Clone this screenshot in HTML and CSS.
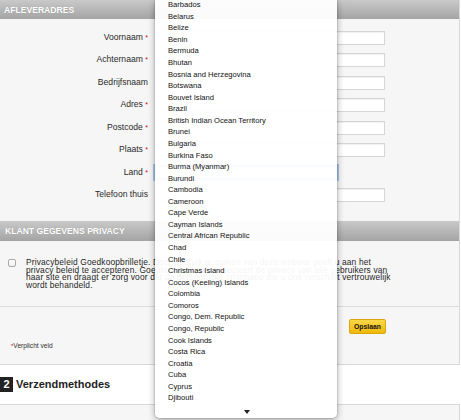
FILE: index.html
```html
<!DOCTYPE html>
<html lang="nl">
<head>
<meta charset="utf-8">
<title>Afleveradres</title>
<link rel="stylesheet" href="styles.css">
</head>
<body>
<div class="page">
  <section class="panel">
    <div class="bar">AFLEVERADRES</div>
    <div class="form">
      <label class="lbl">Voornaam <span class="req">*</span></label><div class="input"></div>
      <label class="lbl">Achternaam <span class="req">*</span></label><div class="input"></div>
      <label class="lbl">Bedrijfsnaam</label><div class="input"></div>
      <label class="lbl">Adres <span class="req">*</span></label><div class="input"></div>
      <label class="lbl">Postcode <span class="req">*</span></label><div class="input"></div>
      <label class="lbl">Plaats <span class="req">*</span></label><div class="input"></div>
      <label class="lbl">Land <span class="req">*</span></label><div class="select"></div>
      <label class="lbl">Telefoon thuis</label><div class="input"></div>
    </div>
    <div class="bar bar2">KLANT GEGEVENS PRIVACY</div>
    <div class="privacy">
      <span class="check"></span>
      <p class="ptext">Privacybeleid Goedkoopbrilletje. Door gebruik te maken van deze website geeft u aan het privacy beleid te accepteren. Goedkoopbrilletje respecteert de privacy van alle gebruikers van haar site en draagt er zorg voor dat de persoonlijke informatie die u ons verschaft vertrouwelijk wordt behandeld.</p>
    </div>
    <div class="footer">
      <div class="actions"><button class="btn">Opslaan</button></div>
      <div class="note"><span class="req">*</span>Verplicht veld</div>
    </div>
  </section>
  <h2 class="step"><span class="num">2</span>Verzendmethodes</h2>
  <section class="panel next"></section>

  <div class="menu">
    <ul class="list">
      <li>Barbados</li>
      <li>Belarus</li>
      <li>Belize</li>
      <li>Benin</li>
      <li>Bermuda</li>
      <li>Bhutan</li>
      <li>Bosnia and Herzegovina</li>
      <li>Botswana</li>
      <li>Bouvet Island</li>
      <li>Brazil</li>
      <li>British Indian Ocean Territory</li>
      <li>Brunei</li>
      <li>Bulgaria</li>
      <li>Burkina Faso</li>
      <li>Burma (Myanmar)</li>
      <li>Burundi</li>
      <li>Cambodia</li>
      <li>Cameroon</li>
      <li>Cape Verde</li>
      <li>Cayman Islands</li>
      <li>Central African Republic</li>
      <li>Chad</li>
      <li>Chile</li>
      <li>Christmas Island</li>
      <li>Cocos (Keeling) Islands</li>
      <li>Colombia</li>
      <li>Comoros</li>
      <li>Congo, Dem. Republic</li>
      <li>Congo, Republic</li>
      <li>Cook Islands</li>
      <li>Costa Rica</li>
      <li>Croatia</li>
      <li>Cuba</li>
      <li>Cyprus</li>
      <li>Djibouti</li>
    </ul>
    <div class="more"><span class="arrow"></span></div>
  </div>
</div>
</body>
</html>
```
FILE: styles.css
```css
html, body {
  margin: 0;
  padding: 0;
  background: #fff;
}
body {
  font-family: "Liberation Sans", Arial, Helvetica, sans-serif;
  color: #333;
  overflow: hidden;
}
.page {
  position: relative;
  width: 461px;
  height: 420px;
  overflow: hidden;
}
.panel {
  background: #f6f6f6;
  border-right: 1px solid #d9d9d9;
  border-bottom: 1px solid #d9d9d9;
  box-sizing: border-box;
  width: 460px;
}
.bar {
  height: 19px;
  line-height: 20px;
  padding-left: 4px;
  background: linear-gradient(#c9c9c9, #a4a4a4);
  color: #fff;
  font-weight: bold;
  font-size: 8.6px;
  text-shadow: 0 0 1px rgba(0,0,0,0.2);
}
.bar2 {
  height: 20px;
  line-height: 20px;
  padding-left: 5px;
}
.form {
  display: grid;
  grid-template-columns: 148px 230px;
  column-gap: 7px;
  grid-auto-rows: 22.45px;
  align-items: center;
  padding: 7.8px 0 14.6px;
}
.lbl {
  text-align: right;
  font-size: 8.6px;
  color: #2a2a2a;
  margin-top: -2px;
}
.req {
  color: #d0021b;
  font-size: 7px;
}
.input {
  height: 14px;
  box-sizing: border-box;
  background: #fff;
  border: 1px solid #d6d6d6;
  box-shadow: inset 0 1px 1px rgba(0,0,0,0.06);
}
.select {
  width: 182px;
  height: 13px;
  box-sizing: border-box;
  background: #fff;
  border: 1px solid #7aa7dc;
  box-shadow: 0 0 0 2px rgba(110,160,225,0.55);
}
.privacy {
  display: flex;
  align-items: flex-start;
  height: 66px;
  box-sizing: border-box;
  padding: 18.5px 0 0 8px;
  border-bottom: 1px solid #dcdcdc;
}
.check {
  width: 8px;
  height: 8px;
  box-sizing: border-box;
  margin-top: 0;
  border: 1px solid #a9a9a9;
  border-radius: 2px;
  background: linear-gradient(#fff, #eee);
  flex: none;
}
.ptext {
  margin: 0 0 0 10px;
  width: 370px;
  font-size: 8.4px;
  letter-spacing: 0.15px;
  line-height: 7.4px;
  color: #1e1e1e;
}
.footer {
  height: 57px;
  padding-top: 12px;
  box-sizing: border-box;
}
.actions {
  width: 386px;
  display: flex;
  justify-content: flex-end;
}
.btn {
  width: 37px;
  height: 15px;
  padding: 0;
  border: 1px solid #d9a70c;
  border-radius: 2px;
  background: linear-gradient(#fbd84a, #f0b90b);
  font-family: "Liberation Sans", Arial, sans-serif;
  font-weight: bold;
  font-size: 6.8px;
  color: #111;
}
.note {
  margin: 8px 0 0 11px;
  font-size: 6.6px;
  color: #333;
}
.note .req {
  font-size: 6px;
}
.step {
  display: flex;
  align-items: center;
  gap: 3px;
  margin: 12px 0 12px;
  font-size: 11px;
  font-weight: bold;
  color: #1e1e1e;
  height: 15px;
}
.num {
  width: 13px;
  height: 15px;
  background: #222;
  color: #fff;
  text-align: center;
  line-height: 15px;
  font-size: 11px;
}
.next {
  height: 40px;
  border-top: 1px solid #d9d9d9;
}
.menu {
  position: absolute;
  left: 155px;
  top: 0;
  width: 182px;
  height: 418px;
  background: rgba(255,255,255,0.95);
  border-radius: 0 0 5px 5px;
  box-shadow: 0 2px 7px rgba(0,0,0,0.35), 0 0 0 1px rgba(0,0,0,0.08);
  overflow: hidden;
}
.list {
  list-style: none;
  margin: -0.8px 0 0;
  padding: 0;
}
.list li {
  height: 11.57px;
  line-height: 11.57px;
  padding-left: 13px;
  font-size: 7.6px;
  color: #111;
  white-space: nowrap;
}
.more {
  display: flex;
  justify-content: center;
  padding-top: 6px;
}
.arrow {
  width: 0;
  height: 0;
  margin-left: 1px;
  border-left: 3px solid transparent;
  border-right: 3px solid transparent;
  border-top: 4px solid #222;
}
```
